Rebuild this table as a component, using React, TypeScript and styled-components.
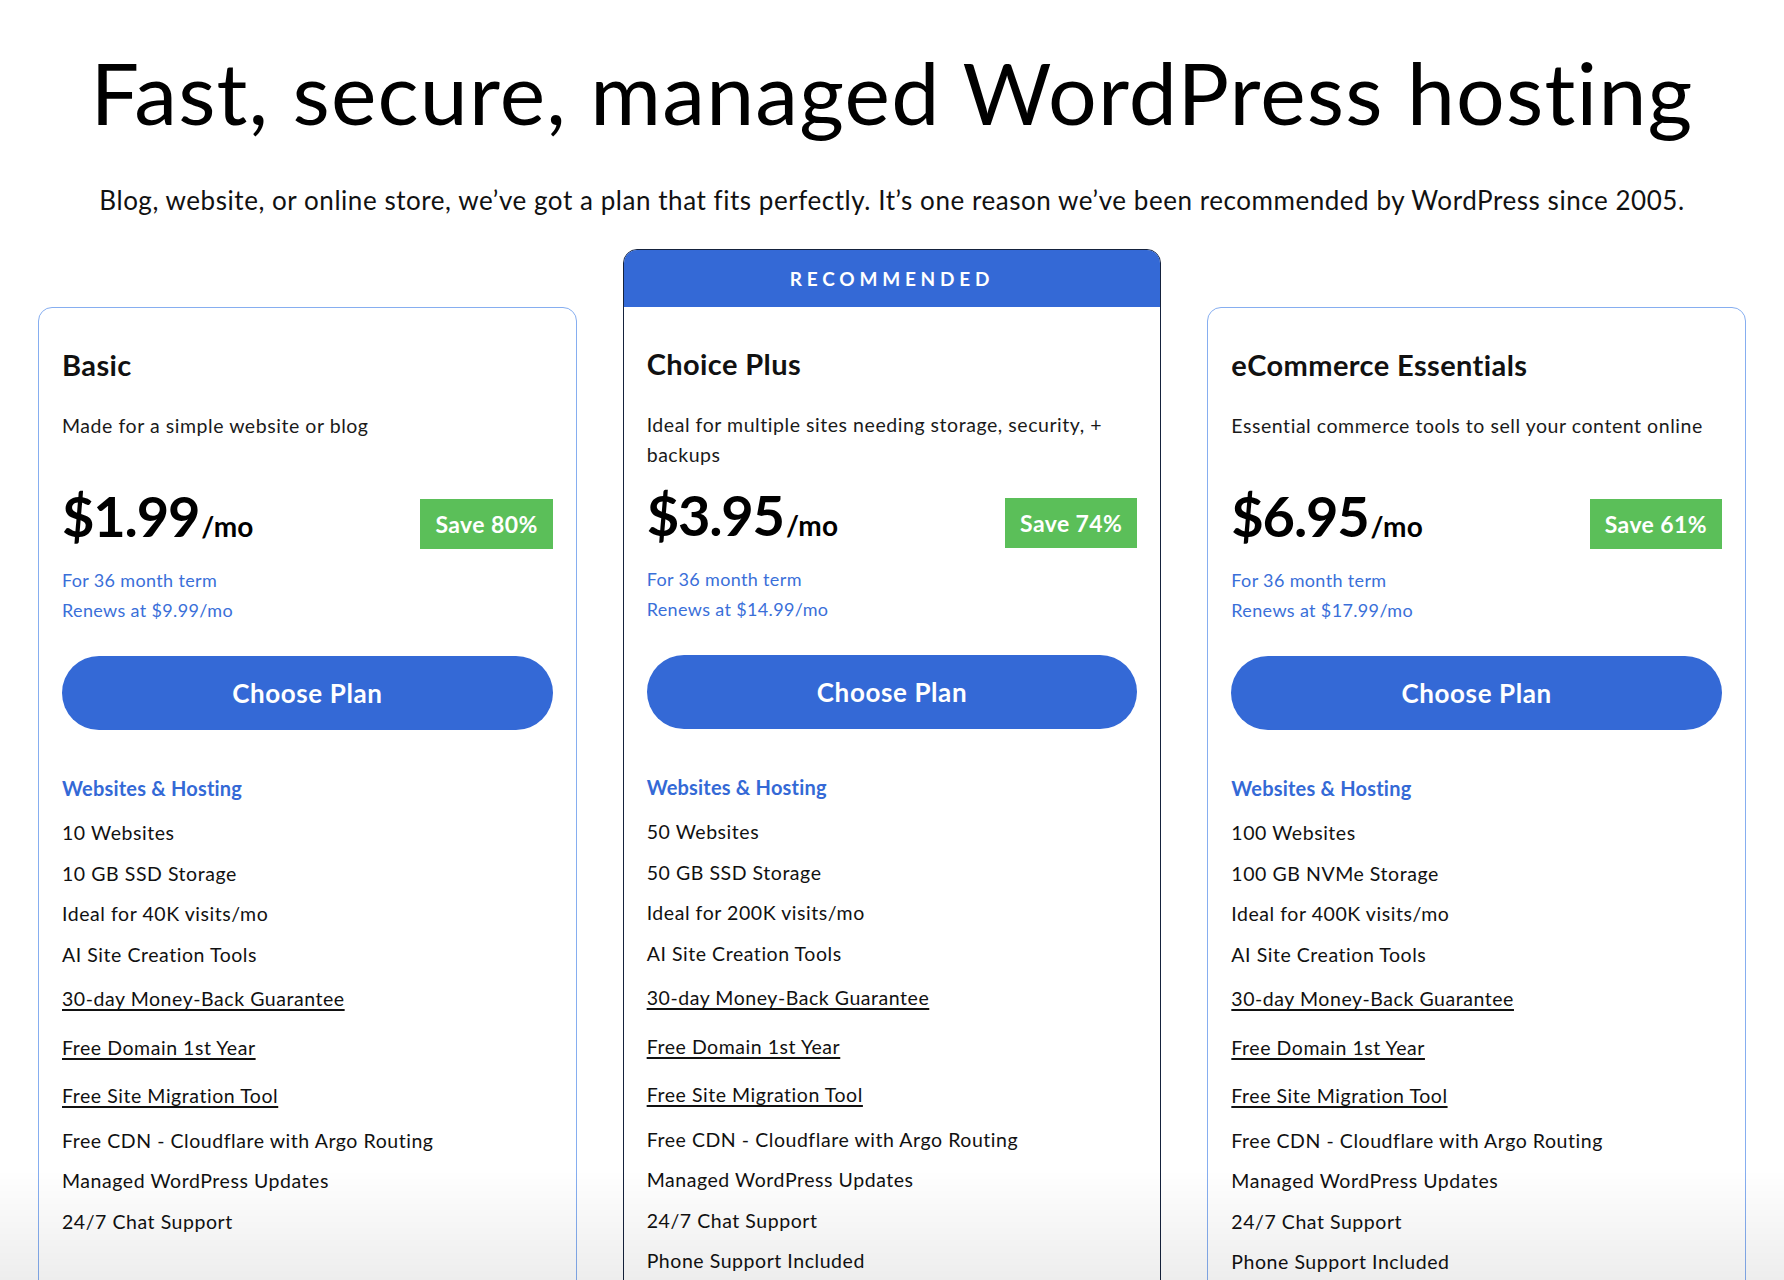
import React from 'react';
import styled, { createGlobalStyle } from 'styled-components';

// DATA
type Feature = { text: string; link?: boolean };
type Plan = {
  name: string;
  blurb: string;
  price: string;
  save: string;
  renews: string;
  featured?: boolean;
  features: Feature[];
};

const shared = (sites: string, storage: string, visits: string, phone: boolean): Feature[] => {
  const list: Feature[] = [
    { text: sites },
    { text: storage },
    { text: visits },
    { text: 'AI Site Creation Tools' },
    { text: '30-day Money-Back Guarantee', link: true },
    { text: 'Free Domain 1st Year', link: true },
    { text: 'Free Site Migration Tool', link: true },
    { text: 'Free CDN - Cloudflare with Argo Routing' },
    { text: 'Managed WordPress Updates' },
    { text: '24/7 Chat Support' },
  ];
  if (phone) list.push({ text: 'Phone Support Included' });
  return list;
};

const plans: Plan[] = [
  {
    name: 'Basic',
    blurb: 'Made for a simple website or blog',
    price: '$1.99',
    save: 'Save 80%',
    renews: 'Renews at $9.99/mo',
    features: shared('10 Websites', '10 GB SSD Storage', 'Ideal for 40K visits/mo', false),
  },
  {
    name: 'Choice Plus',
    blurb: 'Ideal for multiple sites needing storage, security, + backups',
    price: '$3.95',
    save: 'Save 74%',
    renews: 'Renews at $14.99/mo',
    featured: true,
    features: shared('50 Websites', '50 GB SSD Storage', 'Ideal for 200K visits/mo', true),
  },
  {
    name: 'eCommerce Essentials',
    blurb: 'Essential commerce tools to sell your content online',
    price: '$6.95',
    save: 'Save 61%',
    renews: 'Renews at $17.99/mo',
    features: shared('100 Websites', '100 GB NVMe Storage', 'Ideal for 400K visits/mo', true),
  },
];

// RENDER
const App: React.FC = () => {
  return (
    <>
      <GlobalStyle />
      <Page>
        <Title>Fast, secure, managed WordPress hosting</Title>
        <Subtitle>
          Blog, website, or online store, we’ve got a plan that fits perfectly. It’s one reason
          we’ve been recommended by WordPress since 2005.
        </Subtitle>
        <PlanGrid>
          {plans.map((plan) => (
            <Card key={plan.name} featured={!!plan.featured}>
              {plan.featured && <Ribbon>RECOMMENDED</Ribbon>}
              <CardBody>
                <PlanName>{plan.name}</PlanName>
                <Blurb>{plan.blurb}</Blurb>
                <PriceRow>
                  <Price>
                    {plan.price}
                    <PerMonth>/mo</PerMonth>
                  </Price>
                  <SaveBadge>{plan.save}</SaveBadge>
                </PriceRow>
                <Terms>
                  <TermNote>For 36 month term</TermNote>
                  <TermNote>{plan.renews}</TermNote>
                </Terms>
                <ChooseButton>Choose Plan</ChooseButton>
                <GroupTitle>Websites &amp; Hosting</GroupTitle>
                <FeatureList>
                  {plan.features.map((f) => (
                    <FeatureItem key={f.text} link={!!f.link}>
                      {f.link ? <FeatureLink href='#'>{f.text}</FeatureLink> : f.text}
                    </FeatureItem>
                  ))}
                </FeatureList>
              </CardBody>
            </Card>
          ))}
        </PlanGrid>
      </Page>
      <BottomFade />
    </>
  );
};

// STYLED COMPONENTS
const GlobalStyle = createGlobalStyle`
  body {
    margin: 0;
    background: #ffffff;
    color: #111111;
    font-family: Lato, "Open Sans", Arial, sans-serif;
  }
  * { box-sizing: border-box; }
`;

const Page = styled.main`
  padding: 40px 38px 60px;
`;

const Title = styled.h1`
  margin: 0;
  text-align: center;
  font-size: 86px;
  line-height: 1.2;
  font-weight: 400;
  letter-spacing: 1.2px;
  color: #000000;
`;

const Subtitle = styled.p`
  margin: 42px 0 0;
  text-align: center;
  font-size: 26px;
  line-height: 30px;
  letter-spacing: 0.55px;
  color: #111111;
`;

const PlanGrid = styled.div`
  margin-top: 34px;
  display: grid;
  grid-template-columns: repeat(3, 1fr);
  gap: 46px;
  align-items: stretch;
`;

const Card = styled.section<{ featured: boolean }>`
  margin-top: ${(p) => (p.featured ? '0' : '58px')};
  border: ${(p) => (p.featured ? '1.5px solid #15223d' : '1px solid #86aef0')};
  border-radius: 14px;
  overflow: hidden;
  background: #ffffff;
`;

const Ribbon = styled.div`
  height: 57px;
  display: flex;
  align-items: center;
  justify-content: center;
  background: #3469d6;
  color: #ffffff;
  font-size: 19px;
  font-weight: 700;
  letter-spacing: 4.8px;
`;

const CardBody = styled.div`
  padding: 40px 23px 40px;
`;

const PlanName = styled.h2`
  margin: 0;
  font-size: 29px;
  line-height: 34px;
  font-weight: 700;
  letter-spacing: 0.4px;
  color: #111111;
`;

const Blurb = styled.p`
  margin: 29px 0 0;
  min-height: 60px;
  font-size: 19.5px;
  line-height: 30px;
  letter-spacing: 0.55px;
  color: #1a1a1a;
`;

const PriceRow = styled.div`
  margin-top: 28px;
  display: flex;
  justify-content: space-between;
  align-items: flex-start;
`;

const Price = styled.div`
  height: 50px;
  font-size: 56px;
  line-height: 34px;
  padding-top: 0;
  font-weight: 700;
  color: #000000;
  letter-spacing: -1.2px;
`;

const PerMonth = styled.span`
  margin-left: 2px;
  font-size: 28px;
  font-weight: 700;
  letter-spacing: 0.2px;
`;

const SaveBadge = styled.div`
  height: 50px;
  padding: 0 15px;
  display: flex;
  align-items: center;
  background: #5bbf59;
  color: #ffffff;
  font-size: 23px;
  font-weight: 700;
  letter-spacing: 0.4px;
`;

const Terms = styled.div`
  margin-top: 16px;
`;

const TermNote = styled.p`
  margin: 0;
  font-size: 18px;
  line-height: 30px;
  letter-spacing: 0.35px;
  color: #3a6fd9;
`;

const ChooseButton = styled.button`
  display: block;
  width: 100%;
  height: 74px;
  margin-top: 31px;
  border: none;
  border-radius: 37px;
  background: #3469d6;
  color: #ffffff;
  font-family: inherit;
  font-size: 26px;
  font-weight: 700;
  letter-spacing: 0.6px;
  cursor: pointer;
`;

const GroupTitle = styled.h3`
  margin: 43px 0 0;
  font-size: 20px;
  line-height: 30px;
  font-weight: 700;
  letter-spacing: 0.2px;
  color: #3469d6;
`;

const FeatureList = styled.ul`
  list-style: none;
  margin: 10px 0 0;
  padding: 0;
`;

const FeatureItem = styled.li<{ link: boolean }>`
  padding: ${(p) => (p.link ? '10px 0' : '6px 0')};
  font-size: 19.5px;
  line-height: 28.5px;
  letter-spacing: 0.55px;
  color: #111111;
`;

const FeatureLink = styled.a`
  color: #111111;
  text-decoration: underline;
  text-underline-offset: 3px;
  text-decoration-thickness: 1.5px;
`;

const BottomFade = styled.div`
  position: fixed;
  left: 0;
  right: 0;
  bottom: 0;
  height: 110px;
  pointer-events: none;
  background: linear-gradient(rgba(0, 0, 0, 0), rgba(0, 0, 0, 0.07));
`;

export default App;
